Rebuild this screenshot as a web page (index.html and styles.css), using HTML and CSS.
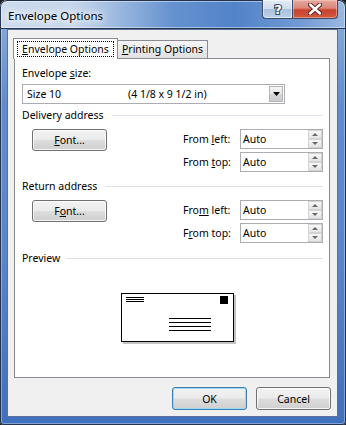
FILE: index.html
```html
<!DOCTYPE html>
<html lang="en">
<head>
    <meta charset="UTF-8">
    <title>Envelope Options</title>
    <link rel="stylesheet" href="styles.css">
</head>
<body>
    <div class="window">
        <div class="titlebar">
            <span class="title">Envelope Options</span>
            <div class="caption">
                <div class="cap-btn help">
                    <svg width="14" height="16" viewBox="0 0 14 16">
                        <text x="7" y="13" text-anchor="middle" class="help-glyph">?</text>
                    </svg>
                </div>
                <div class="cap-btn close">
                    <svg width="14" height="12" viewBox="0 0 14 12">
                        <path d="M2 1.5 L12 10.5 M12 1.5 L2 10.5" stroke="#5a2a25" stroke-width="4.5" stroke-linecap="round"/>
                        <path d="M2 1.5 L12 10.5 M12 1.5 L2 10.5" stroke="#fff" stroke-width="2.4" stroke-linecap="round"/>
                    </svg>
                </div>
            </div>
        </div>

        <div class="client">
            <div class="tabs">
                <div class="tab selected"><span class="focus"><u>E</u>nvelope Options</span></div>
                <div class="tab"><u>P</u>rinting Options</div>
            </div>

            <div class="panel">
                <div class="label">Envelope <u>s</u>ize:</div>
                <div class="combo">
                    <span class="combo-size">Size 10</span>
                    <span class="combo-dim">(4 1/8 x 9 1/2 in)</span>
                    <span class="combo-arrow">
                        <svg width="7" height="4" viewBox="0 0 7 4"><path d="M0 0 H7 L3.5 4 Z" fill="#000"/></svg>
                    </span>
                </div>

                <div class="group-title">Delivery address</div>
                <div class="group">
                    <button class="btn font-btn"><u>F</u>ont...</button>
                    <div class="fields">
                        <div class="field">
                            <span class="field-label">From <u>l</u>eft:</span>
                            <div class="spin">
                                <span class="spin-value">Auto</span>
                                <span class="spin-btns"><span class="spin-up"></span><span class="spin-down"></span></span>
                            </div>
                        </div>
                        <div class="field">
                            <span class="field-label">From <u>t</u>op:</span>
                            <div class="spin">
                                <span class="spin-value">Auto</span>
                                <span class="spin-btns"><span class="spin-up"></span><span class="spin-down"></span></span>
                            </div>
                        </div>
                    </div>
                </div>

                <div class="group-title return">Return address</div>
                <div class="group">
                    <button class="btn font-btn">F<u>o</u>nt...</button>
                    <div class="fields">
                        <div class="field">
                            <span class="field-label">Fro<u>m</u> left:</span>
                            <div class="spin">
                                <span class="spin-value">Auto</span>
                                <span class="spin-btns"><span class="spin-up"></span><span class="spin-down"></span></span>
                            </div>
                        </div>
                        <div class="field">
                            <span class="field-label">F<u>r</u>om top:</span>
                            <div class="spin">
                                <span class="spin-value">Auto</span>
                                <span class="spin-btns"><span class="spin-up"></span><span class="spin-down"></span></span>
                            </div>
                        </div>
                    </div>
                </div>

                <div class="group-title preview-title">Preview</div>
                <div class="preview">
                    <svg width="116" height="52" viewBox="0 0 116 52">
                        <rect x="2" y="2" width="113" height="49" fill="#777" opacity="0.45"/>
                        <rect x="0.5" y="0.5" width="112" height="48" fill="#fff" stroke="#000"/>
                        <line x1="112.5" y1="1" x2="112.5" y2="49" stroke="#000"/>
                        <line x1="1" y1="48.5" x2="113" y2="48.5" stroke="#000"/>
                        <path d="M5 4.5 H23 M5 6.5 H23 M5 8.5 H23" stroke="#000"/>
                        <rect x="99" y="3" width="8" height="8" fill="#000"/>
                        <path d="M48 25.5 H90 M48 29.5 H90 M48 33.5 H90 M48 37.5 H90" stroke="#000" stroke-width="1.2"/>
                    </svg>
                </div>
            </div>

            <div class="footer">
                <button class="btn default">OK</button>
                <button class="btn">Cancel</button>
            </div>
        </div>
    </div>
</body>
</html>
```

FILE: styles.css
```css
* {
    box-sizing: border-box;
}
html, body {
    margin: 0;
    padding: 0;
    background: #1c1c1c;
}
body {
    width: 346px;
    height: 425px;
    overflow: hidden;
    font-family: "Noto Sans", sans-serif;
    font-size: 10.5px;
    color: #000;
}
u {
    text-decoration: underline;
    text-underline-offset: 1px;
}

/* window frame */
.window {
    width: 346px;
    height: 425px;
    display: flex;
    flex-direction: column;
    border-radius: 7px 7px 4px 4px;
    background: linear-gradient(180deg, #8fb0dd 0%, #5f8ccd 25%, #5886cb 60%, #3f70bd 100%);
    box-shadow: inset 0 0 0 1px #25344e, inset 0 0 0 2px rgba(255, 255, 255, 0.35);
}
.titlebar {
    height: 29px;
    display: flex;
    align-items: flex-start;
    padding: 0 8px;
    border-radius: 7px 7px 0 0;
    background: linear-gradient(90deg, #cddbee 0%, #c4d5eb 22%, #94b4de 36%, #6591cf 50%, #5283c8 68%, #6f99d3 86%, #9cb9e1 100%);
    box-shadow: inset 0 0 0 1px #25344e, inset 0 0 0 2px rgba(255, 255, 255, 0.45);
}
.title {
    font-size: 11.5px;
    line-height: 29px;
    padding-top: 1px;
    text-shadow: 0 0 6px #fff, 0 0 10px #fff, 0 0 12px #fff;
}
.caption {
    margin-left: auto;
    display: flex;
}
.cap-btn {
    height: 19px;
    display: flex;
    align-items: center;
    justify-content: center;
    border: 1px solid #3b4a66;
    border-top: none;
}
.help {
    width: 30px;
    border-radius: 0 0 0 4px;
    border-right: none;
    background: linear-gradient(180deg, #e3ebf6 0%, #d0ddef 48%, #aac0de 52%, #bcd0ea 100%);
    box-shadow: inset 0 0 0 1px rgba(255, 255, 255, 0.5);
}
.help-glyph {
    font-family: "DejaVu Sans", sans-serif;
    font-size: 13px;
    font-weight: bold;
    fill: #fff;
    stroke: #3b4a66;
    stroke-width: 2.2px;
    paint-order: stroke;
}
.close {
    width: 46px;
    border-radius: 0 0 4px 0;
    background: linear-gradient(180deg, #e7a89e 0%, #dc8679 45%, #c8432f 55%, #d2583f 100%);
    box-shadow: inset 0 0 0 1px rgba(255, 220, 210, 0.45);
}

/* client area */
.client {
    flex: 1;
    margin: 0 8px 8px 7px;
    background: #f0f0f0;
    border: 1px solid #5a7297;
    padding: 8px 7px 6px 6px;
    display: flex;
    flex-direction: column;
}
.tabs {
    display: flex;
    height: 20px;
    position: relative;
    z-index: 1;
}
.tab {
    height: 18px;
    margin-top: 2px;
    margin-left: -1px;
    width: 91px;
    text-align: center;
    line-height: 16px;
    border: 1px solid #898c95;
    border-bottom: none;
    background: linear-gradient(180deg, #f5f5f5 0%, #ebebeb 50%, #e0e0e0 100%);
}
.tab.selected {
    position: relative;
    z-index: 2;
    width: 105px;
    height: 21px;
    margin-top: 0;
    margin-left: -1px;
    padding-top: 2px;
    background: #fff;
}
.focus {
    display: inline-block;
    width: 97px;
    line-height: 14px;
    border: 1px dotted #000;
}
.panel {
    flex: 1;
    background: #fff;
    border: 1px solid #898c95;
    padding: 7px 6px 0 7px;
}
.label {
    line-height: 15px;
}
.combo {
    margin-top: 3px;
    width: 263px;
    height: 20px;
    border: 1px solid #abadb3;
    display: flex;
    align-items: center;
    padding-left: 4px;
}
.combo-size {
    width: 101px;
}
.combo-arrow {
    margin-left: auto;
    margin-right: 1px;
    width: 14px;
    height: 16px;
    display: flex;
    align-items: center;
    justify-content: center;
    border: 1px solid #b5b5b5;
    background: linear-gradient(180deg, #f6f6f6 0%, #e6e6e6 50%, #d6d6d6 51%, #cbcbcb 100%);
}

.group-title {
    display: flex;
    align-items: center;
    line-height: 15px;
    margin-top: 4px;
}
.group-title::after {
    content: "";
    flex: 1;
    height: 1px;
    margin-left: 8px;
    background: #dbe1e8;
}
.group-title.return {
    margin-top: 7px;
}
.group-title.preview-title {
    margin-top: 8px;
}
.preview-title::after {
    margin-left: 6px;
}
.group {
    display: flex;
    justify-content: space-between;
    margin-top: 6px;
}
.fields {
    display: flex;
    flex-direction: column;
    gap: 3px;
}
.field {
    display: flex;
    align-items: center;
}
.field-label {
    width: 57px;
}
.spin {
    width: 83px;
    height: 20px;
    border: 1px solid #abadb3;
    display: flex;
    align-items: center;
    padding-left: 2px;
}
.spin-btns {
    margin-left: auto;
    width: 14px;
    height: 18px;
    display: flex;
    flex-direction: column;
}
.spin-up, .spin-down {
    flex: 1;
    position: relative;
    border: 1px solid #d3d3d3;
    background: linear-gradient(180deg, #f7f7f7, #e4e4e4);
}
.spin-up::after, .spin-down::after {
    content: "";
    position: absolute;
    left: 3px;
    top: 2px;
    border-left: 3.5px solid transparent;
    border-right: 3.5px solid transparent;
}
.spin-up::after {
    border-bottom: 3px solid #6a6a6a;
}
.spin-down::after {
    border-top: 3px solid #6a6a6a;
}

.preview {
    margin-top: 27px;
    margin-left: 99px;
    line-height: 0;
}

/* buttons */
.btn {
    font-family: "Noto Sans", sans-serif;
    font-size: 10.5px;
    color: #000;
    width: 75px;
    height: 23px;
    padding: 0;
    border: 1px solid #707070;
    border-radius: 3px;
    background: linear-gradient(180deg, #f2f2f2 0%, #ebebeb 48%, #dddddd 52%, #cfcfcf 100%);
    box-shadow: inset 0 0 0 1px rgba(255, 255, 255, 0.8);
}
.font-btn {
    margin-left: 10px;
    height: 22px;
}
.footer {
    display: flex;
    justify-content: flex-end;
    gap: 9px;
    margin-top: 9px;
    margin-right: -1px;
}
.btn.default {
    border-color: #3c7fb1;
    box-shadow: inset 0 0 0 1px #9fd7f4;
}
```
